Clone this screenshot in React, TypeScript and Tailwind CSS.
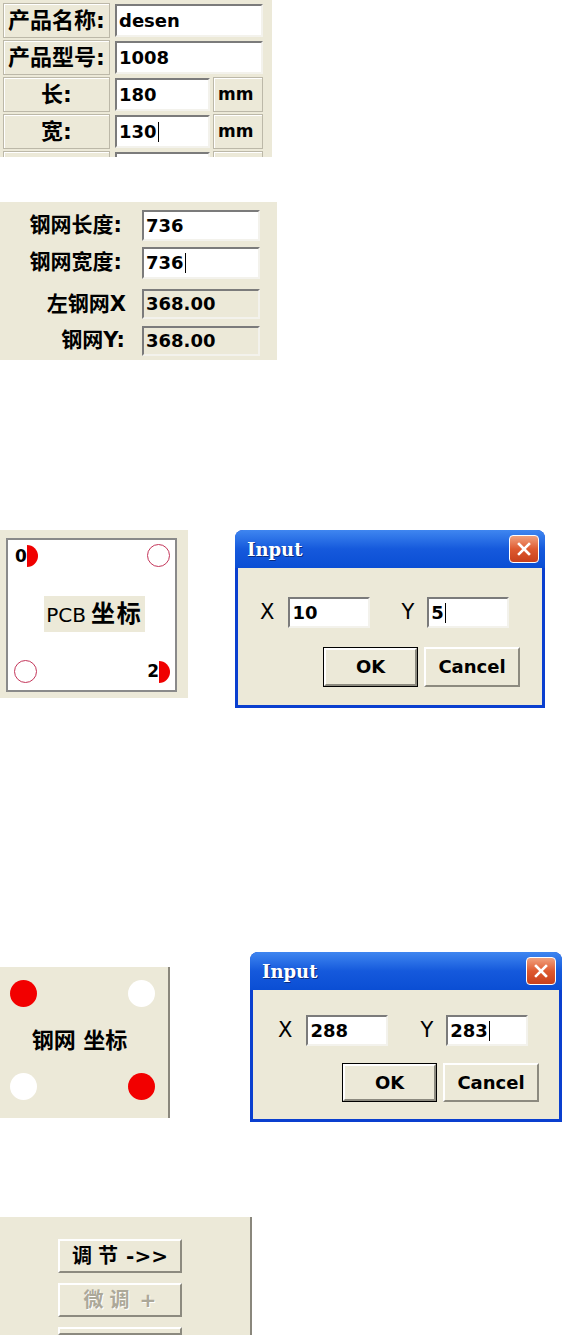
import React from "react";

const sunken =
  "border-2 border-t-[#7b7b7b] border-l-[#7b7b7b] border-r-[#f3f2ec] border-b-[#f3f2ec]";
const raisedCell =
  "border border-[#bcb8a8] shadow-[inset_1px_1px_0_#ffffff]";
const btnRaised =
  "border-2 border-t-white border-l-white border-r-[#8c8a7f] border-b-[#8c8a7f] bg-[#ece9d8]";

function Caret() {
  return <span className="inline-block w-px h-[20px] bg-black align-middle ml-px" />;
}

function Field({ w, h, value, caret, bg = "bg-white" }: { w: string; h: string; value: string; caret?: boolean; bg?: string }) {
  return (
    <div className={`${w} ${h} ${sunken} ${bg} flex items-center pl-[2px] text-[18px] leading-none`}>
      <span>{value}</span>
      {caret && <Caret />}
    </div>
  );
}

function ProductPanel() {
  const rows = [
    { label: "产品名称:", value: "desen", unit: false, center: false },
    { label: "产品型号:", value: "1008", unit: false, center: false },
    { label: "长:", value: "180", unit: true, center: true },
    { label: "宽:", value: "130", unit: true, center: true, caret: true },
    { label: "", value: "", unit: true, center: true },
  ];
  return (
    <div className="w-[272px] h-[157px] bg-[#ece9d8] overflow-hidden pt-[3px] pl-[3px] flex flex-col gap-[2px]">
      {rows.map((r, i) => (
        <div key={i} className="flex items-center h-[35px] shrink-0">
          <div
            className={`w-[107px] h-[35px] ${raisedCell} flex items-center text-[22px] ${r.center ? "justify-center" : "pl-[4px]"}`}
          >
            {r.label}
          </div>
          <div className="ml-[5px]">
            <Field w={r.unit ? "w-[95px]" : "w-[148px]"} h="h-[33px]" value={r.value} caret={r.caret} />
          </div>
          {r.unit && (
            <div className={`ml-[3px] w-[50px] h-[35px] ${raisedCell} flex items-center pl-[4px] text-[17px]`}>
              {r.value ? "mm" : ""}
            </div>
          )}
        </div>
      ))}
    </div>
  );
}

function StencilSizePanel() {
  return (
    <div className="mt-[45px] w-[277px] h-[158px] bg-[#ece9d8] pt-[8px] flex flex-col">
      <div className="flex items-center">
        <div className="w-[122px] text-right text-[21px]">钢网长度:</div>
        <div className="ml-[20px]"><Field w="w-[118px]" h="h-[31px]" value="736" /></div>
      </div>
      <div className="flex items-center mt-[5px]">
        <div className="w-[122px] text-right text-[21px]">钢网宽度:</div>
        <div className="ml-[20px]"><Field w="w-[118px]" h="h-[32px]" value="736" caret /></div>
      </div>
      <div className="flex items-center mt-[10px]">
        <div className="w-[126px] text-right text-[21px]">左钢网X</div>
        <div className="ml-[16px]"><Field w="w-[118px]" h="h-[30px]" value="368.00" bg="bg-[#ece9d8]" /></div>
      </div>
      <div className="flex items-center mt-[5px]">
        <div className="w-[125px] text-right text-[21px]">钢网Y:</div>
        <div className="ml-[17px]"><Field w="w-[118px]" h="h-[30px]" value="368.00" bg="bg-[#ece9d8]" /></div>
      </div>
    </div>
  );
}

function Ring() {
  return <div className="w-[23px] h-[23px] rounded-full border border-[#c4365a]" />;
}

function HalfDot() {
  return <div className="w-[11px] h-[22px] rounded-r-full bg-[#f00000]" />;
}

function PcbPanel() {
  return (
    <div className="w-[188px] h-[168px] bg-[#ece9d8] pt-[8px] pl-[6px]">
      <div className="w-[171px] h-[154px] bg-white border-2 border-[#8a8a8a] flex flex-col justify-between pt-[4px] pb-[7px] pl-[7px] pr-[5px]">
        <div className="flex items-center justify-between">
          <div className="flex items-center">
            <span className="text-[17px] leading-none mt-[2px]">0</span>
            <HalfDot />
          </div>
          <Ring />
        </div>
        <div className="flex justify-center pl-[4px]">
          <div className="bg-[#ece9d8] px-[2px] flex items-baseline">
            <span className="text-[20px] font-normal font-['DejaVu_Sans',sans-serif]">PCB</span>
            <span className="text-[24px] ml-[5px] tracking-[2px]">坐标</span>
          </div>
        </div>
        <div className="flex items-center justify-between">
          <div className="ml-[-1px]"><Ring /></div>
          <div className="flex items-center">
            <span className="text-[17px] leading-none">2</span>
            <HalfDot />
          </div>
        </div>
      </div>
    </div>
  );
}

function CloseButton() {
  return (
    <div className="w-[30px] h-[28px] rounded-[4px] border border-white bg-linear-to-b from-[#f0a07c] via-[#de5a30] to-[#c8401c] flex items-center justify-center">
      <svg width="16" height="16" viewBox="0 0 16 16">
        <path d="M3 3 L13 13 M13 3 L3 13" stroke="white" strokeWidth="2.6" strokeLinecap="square" />
      </svg>
    </div>
  );
}

function InputDialog({
  w, h, xVal, yVal, rowTop, padL, inW, midGap, btnTop, okLeft, btnH,
}: {
  w: string; h: string; xVal: string; yVal: string; rowTop: string; padL: string;
  inW: string; midGap: string; btnTop: string; okLeft: string; btnH: string;
}) {
  return (
    <div className={`${w} ${h} flex flex-col rounded-t-[8px] overflow-hidden bg-[#0a3fcf]`}>
      <div className="h-[38px] shrink-0 bg-linear-to-b from-[#3f86f0] via-[#1559dc] to-[#0a4ed4] flex items-center justify-between pl-[12px] pr-[6px]">
        <span className="font-['DejaVu_Serif',serif] text-[18px] font-bold text-white [text-shadow:1px_1px_0_#0a2c80]">Input</span>
        <CloseButton />
      </div>
      <div className="flex-1 mx-[3px] mb-[3px] bg-[#ece9d8] flex flex-col">
        <div className={`flex items-center ${rowTop} ${padL}`}>
          <span className="text-[21px] font-normal font-['DejaVu_Sans',sans-serif]">X</span>
          <div className="ml-[14px]"><Field w={inW} h="h-[31px]" value={xVal} /></div>
          <span className={`${midGap} text-[21px] font-normal font-['DejaVu_Sans',sans-serif]`}>Y</span>
          <div className="ml-[13px]"><Field w={inW} h="h-[31px]" value={yVal} caret /></div>
        </div>
        <div className={`flex ${btnTop} ${okLeft} gap-[6px]`}>
          <div className={`w-[95px] ${btnH} border border-black`}>
            <div className={`w-full h-full ${btnRaised} flex items-center justify-center text-[18px]`}>OK</div>
          </div>
          <div className={`w-[96px] ${btnH} ${btnRaised} flex items-center justify-center text-[18px]`}>Cancel</div>
        </div>
      </div>
    </div>
  );
}

function Dot({ red }: { red?: boolean }) {
  return <div className={`w-[27px] h-[27px] rounded-full ${red ? "bg-[#f20000]" : "bg-white"}`} />;
}

function StencilPanel() {
  return (
    <div className="mt-[15px] w-[170px] h-[151px] bg-[#ece9d8] border-r-2 border-[#8a877c] flex flex-col justify-between pt-[13px] pb-[18px] pl-[10px] pr-[13px]">
      <div className="flex justify-between"><Dot red /><Dot /></div>
      <div className="text-[22px] text-center pr-[6px]">钢网 坐标</div>
      <div className="flex justify-between"><Dot /><Dot red /></div>
    </div>
  );
}

function AdjustPanel() {
  return (
    <div className="mt-[95px] w-[252px] h-[118px] bg-[#ece9d8] border-r-2 border-[#8a877c] pl-[58px] pt-[22px] flex flex-col gap-[10px]">
      <div className={`w-[124px] h-[40px] ${btnRaised} flex items-center justify-center text-[20px]`}>
        <span className="tracking-[6px]">调节</span>
        <span className="ml-[2px]">-&gt;&gt;</span>
      </div>
      <div className={`w-[124px] h-[40px] ${btnRaised} flex items-center justify-center text-[20px] text-[#aca899] [text-shadow:1px_1px_0_#ffffff]`}>
        <span className="tracking-[6px]">微调</span>
        <span className="ml-[4px]">+</span>
      </div>
      <div className={`w-[124px] h-[40px] ${btnRaised}`} />
    </div>
  );
}

export default function App() {
  return (
    <div className="w-[565px] h-[1335px] bg-white overflow-hidden text-black font-bold font-['DejaVu_Sans','Noto_Sans_CJK_SC',sans-serif]">
      <ProductPanel />
      <StencilSizePanel />
      <div className="mt-[170px] flex items-start">
        <PcbPanel />
        <div className="ml-[47px]">
          <InputDialog
            w="w-[310px]" h="h-[178px]" xVal="10" yVal="5"
            rowTop="mt-[29px]" padL="pl-[22px]" inW="w-[82px]" midGap="ml-[31px]"
            btnTop="mt-[18px]" okLeft="pl-[85px]" btnH="h-[40px]"
          />
        </div>
      </div>
      <div className="mt-[244px] flex items-start">
        <StencilPanel />
        <div className="ml-[80px]">
          <InputDialog
            w="w-[312px]" h="h-[170px]" xVal="288" yVal="283"
            rowTop="mt-[25px]" padL="pl-[25px]" inW="w-[82px]" midGap="ml-[32px]"
            btnTop="mt-[16px]" okLeft="pl-[89px]" btnH="h-[39px]"
          />
        </div>
      </div>
      <AdjustPanel />
    </div>
  );
}
